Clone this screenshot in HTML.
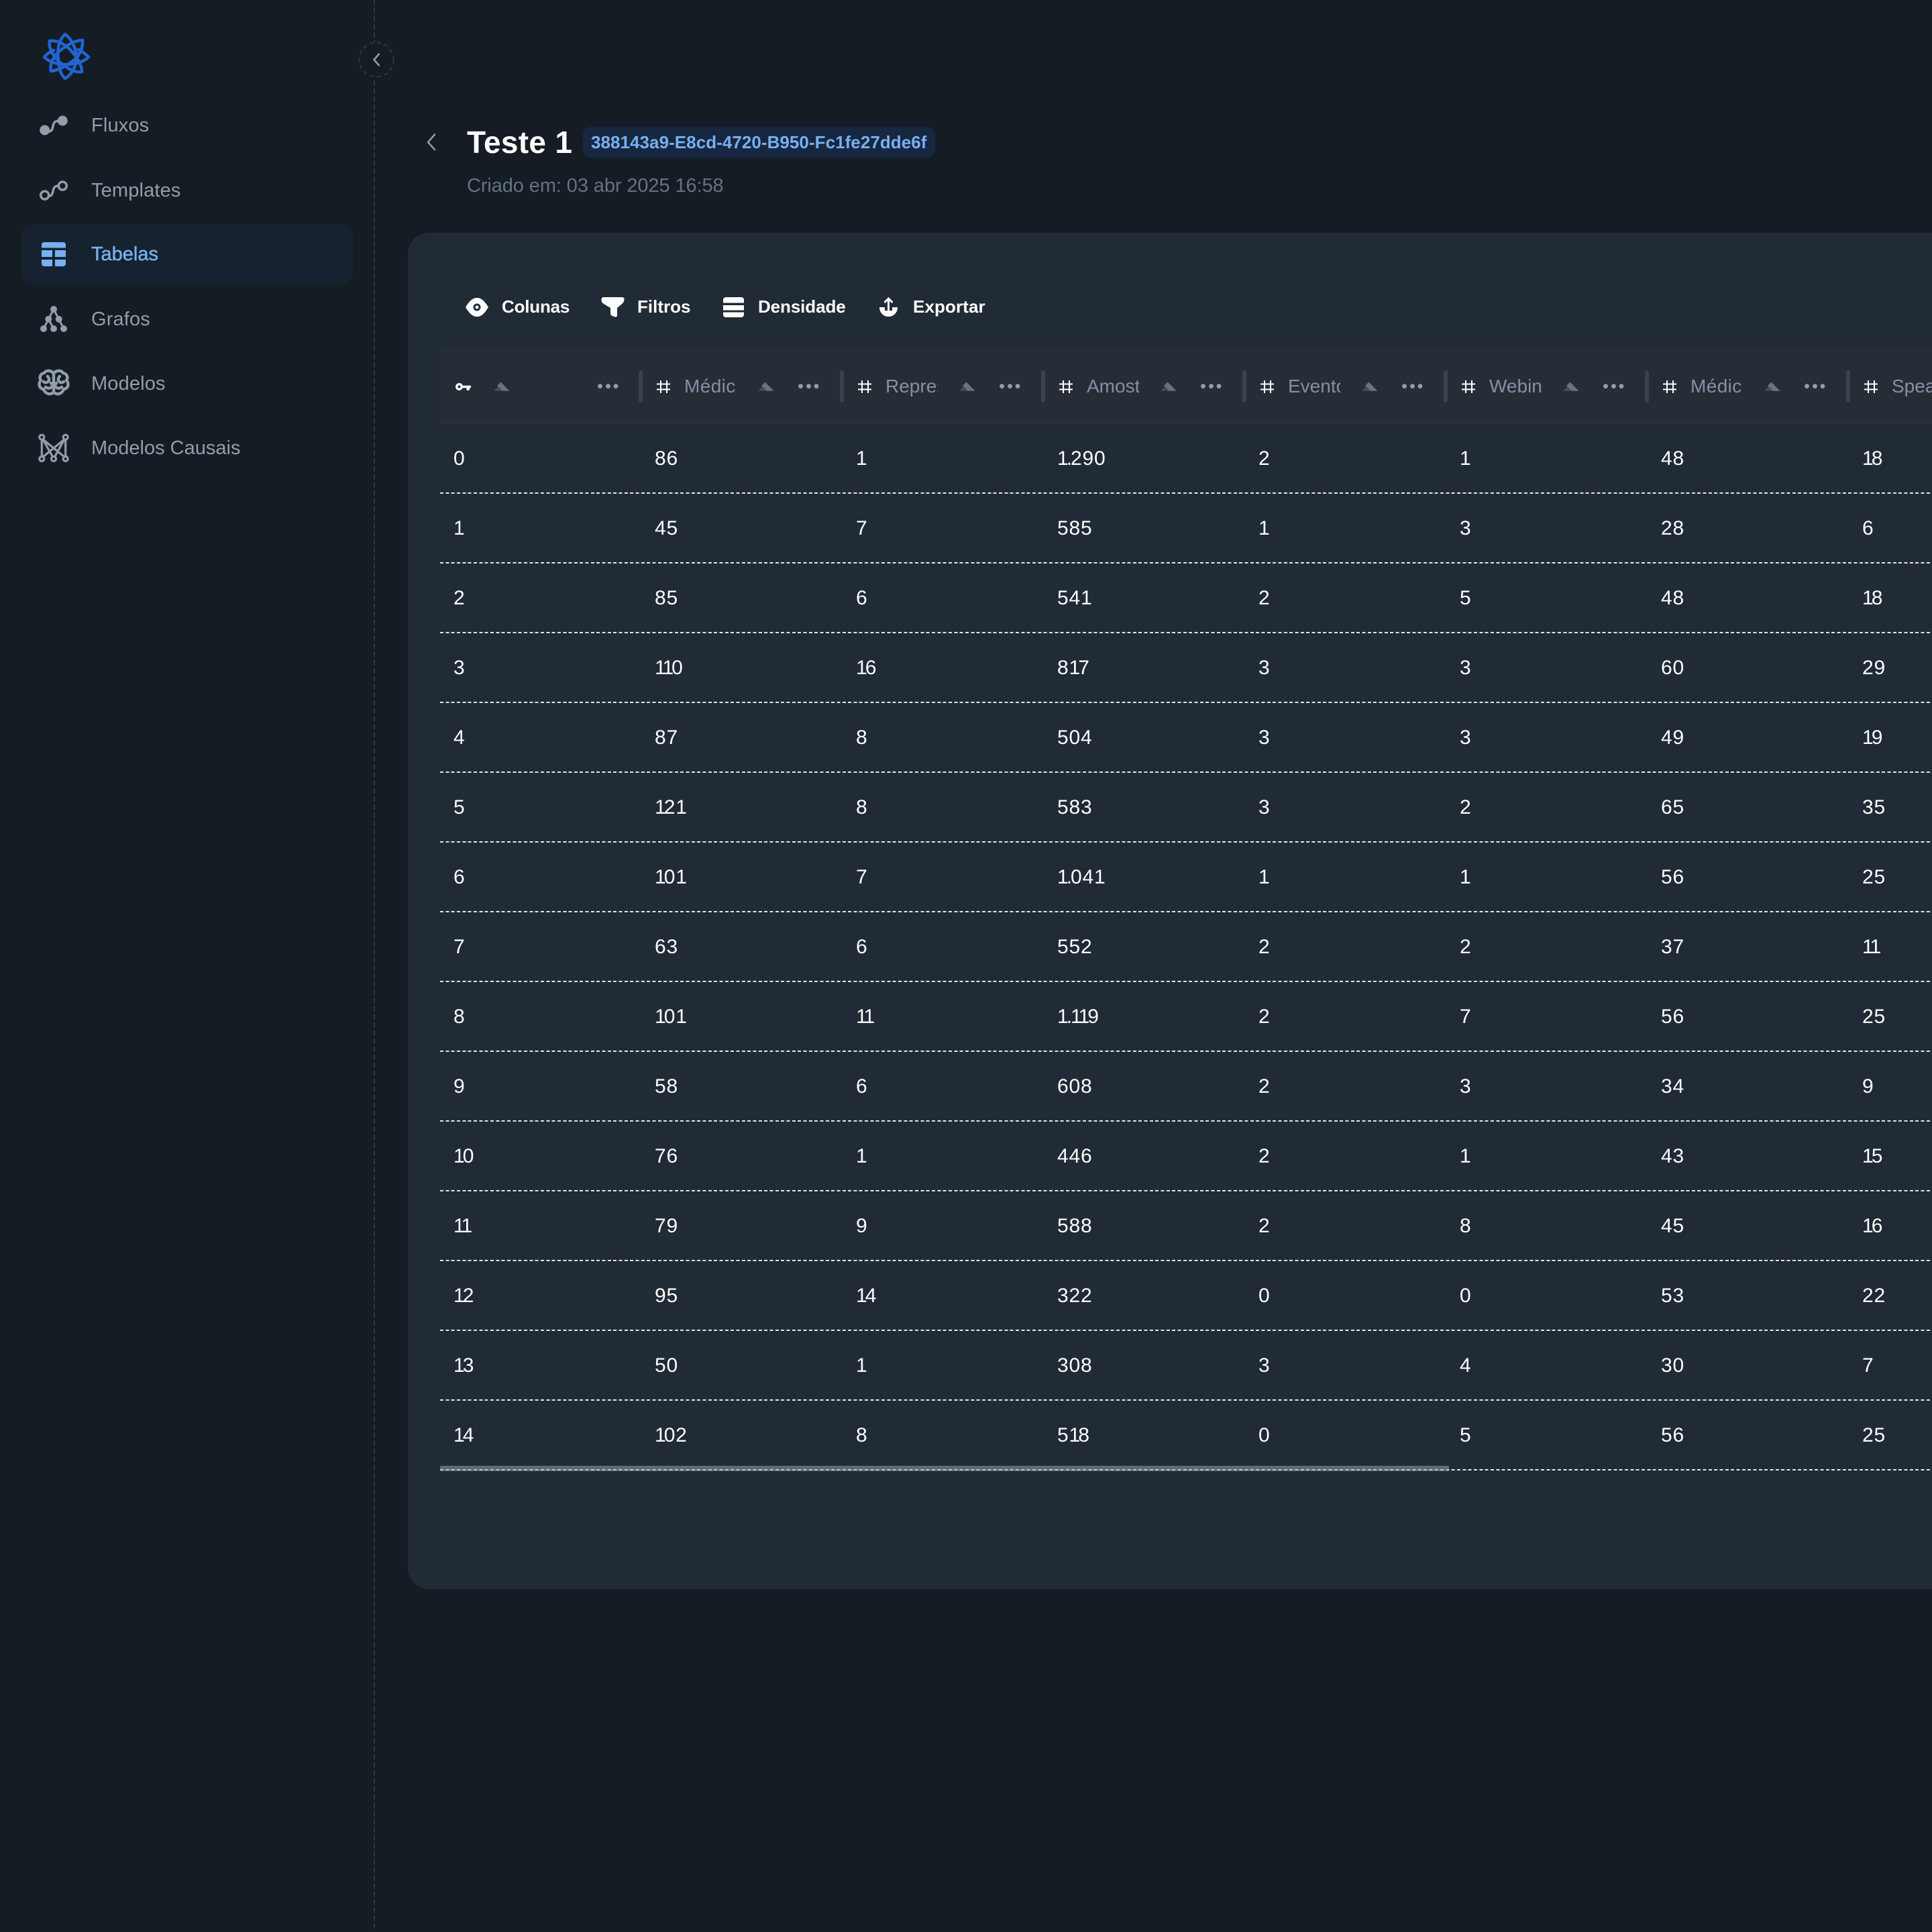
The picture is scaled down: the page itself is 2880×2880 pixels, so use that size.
<!DOCTYPE html>
<html lang="pt">
<head>
<meta charset="utf-8">
<title>Teste 1</title>
<style>
html,body{margin:0;padding:0;background:#161c24;}
body{position:relative;width:2880px;height:2880px;overflow:hidden;font-family:"Liberation Sans",sans-serif;color:#fff;}
.a{position:absolute;white-space:nowrap;}
.nav{left:136px;font-size:29px;line-height:40px;color:#919eab;letter-spacing:.15px;}
.tb{font-size:26px;font-weight:700;line-height:36px;top:439px;color:#fff;}
.card{position:absolute;left:608px;top:347px;width:2400px;height:2022px;background:#212b36;border-radius:32px;}
.head{position:absolute;left:656px;top:520px;width:2224px;height:112px;background:#262d37;border-bottom:2px solid #2c3039;box-sizing:border-box;}
.ht{position:absolute;top:556px;height:40px;line-height:40px;width:78px;overflow:hidden;font-size:28px;color:#8192a6;white-space:nowrap;}
.r{position:absolute;left:656px;width:2224px;height:104px;display:flex;font-size:30px;line-height:104px;letter-spacing:.8px;color:#fff;overflow:hidden;}
.r:after{content:"";position:absolute;left:0;right:0;bottom:0;height:2px;background:repeating-linear-gradient(90deg,rgba(255,255,255,.88) 0 5px,transparent 5px 8.33px);}
.r span{display:block;flex:0 0 300px;box-sizing:border-box;padding-left:20px;}
.r i{font-style:normal;letter-spacing:-3px;}
.r b{font-weight:400;letter-spacing:-2px;}
svg{position:absolute;left:0;top:0;}
</style>
</head>
<body>
<div class="a" style="left:32px;top:335px;width:494px;height:88px;background:#16222f;border-radius:16px;"></div>
<div class="card"></div>
<div class="head"></div>

<div class="a nav" style="top:167px;">Fluxos</div>
<div class="a nav" style="top:264px;">Templates</div>
<div class="a nav" style="top:359px;color:#76b0f1;letter-spacing:0;-webkit-text-stroke:.5px #76b0f1;">Tabelas</div>
<div class="a nav" style="top:456px;">Grafos</div>
<div class="a nav" style="top:552px;">Modelos</div>
<div class="a nav" style="top:648px;letter-spacing:0;">Modelos Causais</div>

<div class="a" style="left:696px;top:184px;font-size:46px;font-weight:700;line-height:56px;letter-spacing:.3px;">Teste 1</div>
<div class="a" style="left:869px;top:189px;width:525px;height:46px;background:#182740;border-radius:12px;"></div>
<div class="a" style="left:881px;top:194px;font-size:26px;font-weight:700;line-height:36px;color:#76b0f1;letter-spacing:.05px;">388143a9-E8cd-4720-B950-Fc1fe27dde6f</div>
<div class="a" style="left:696px;top:257px;font-size:29px;line-height:40px;color:#637381;letter-spacing:-.1px;">Criado em: 03 abr 2025 16:58</div>

<div class="a tb" style="left:748px;letter-spacing:-.2px;">Colunas</div>
<div class="a tb" style="left:950px;">Filtros</div>
<div class="a tb" style="left:1130px;letter-spacing:-.1px;">Densidade</div>
<div class="a tb" style="left:1361px;letter-spacing:.1px;">Exportar</div>

<div class="ht" style="left:1020px;width:77px;letter-spacing:.4px;">Médicos</div>
<div class="ht" style="left:1320px;">Representantes</div>
<div class="ht" style="left:1620px;">Amostras</div>
<div class="ht" style="left:1920px;">Eventos</div>
<div class="ht" style="left:2220px;">Webinars</div>
<div class="ht" style="left:2520px;width:77px;letter-spacing:.4px;">Médicos</div>
<div class="ht" style="left:2820px;">Speakers</div>

<div class="r" style="top:632px;"><span>0</span><span>86</span><span>1</span><span><i>1</i><b>.</b>290</span><span>2</span><span>1</span><span>48</span><span><i>1</i>8</span></div>
<div class="r" style="top:736px;"><span>1</span><span>45</span><span>7</span><span>585</span><span>1</span><span>3</span><span>28</span><span>6</span></div>
<div class="r" style="top:840px;"><span>2</span><span>85</span><span>6</span><span>54<i>1</i></span><span>2</span><span>5</span><span>48</span><span><i>1</i>8</span></div>
<div class="r" style="top:944px;"><span>3</span><span><i>11</i>0</span><span><i>1</i>6</span><span>8<i>1</i>7</span><span>3</span><span>3</span><span>60</span><span>29</span></div>
<div class="r" style="top:1048px;"><span>4</span><span>87</span><span>8</span><span>504</span><span>3</span><span>3</span><span>49</span><span><i>1</i>9</span></div>
<div class="r" style="top:1152px;"><span>5</span><span><i>1</i>2<i>1</i></span><span>8</span><span>583</span><span>3</span><span>2</span><span>65</span><span>35</span></div>
<div class="r" style="top:1256px;"><span>6</span><span><i>1</i>0<i>1</i></span><span>7</span><span><i>1</i><b>.</b>04<i>1</i></span><span>1</span><span>1</span><span>56</span><span>25</span></div>
<div class="r" style="top:1360px;"><span>7</span><span>63</span><span>6</span><span>552</span><span>2</span><span>2</span><span>37</span><span><i>11</i></span></div>
<div class="r" style="top:1464px;"><span>8</span><span><i>1</i>0<i>1</i></span><span><i>11</i></span><span><i>1</i><b>.</b><i>11</i>9</span><span>2</span><span>7</span><span>56</span><span>25</span></div>
<div class="r" style="top:1568px;"><span>9</span><span>58</span><span>6</span><span>608</span><span>2</span><span>3</span><span>34</span><span>9</span></div>
<div class="r" style="top:1672px;"><span><i>1</i>0</span><span>76</span><span>1</span><span>446</span><span>2</span><span>1</span><span>43</span><span><i>1</i>5</span></div>
<div class="r" style="top:1776px;"><span><i>11</i></span><span>79</span><span>9</span><span>588</span><span>2</span><span>8</span><span>45</span><span><i>1</i>6</span></div>
<div class="r" style="top:1880px;"><span><i>1</i>2</span><span>95</span><span><i>1</i>4</span><span>322</span><span>0</span><span>0</span><span>53</span><span>22</span></div>
<div class="r" style="top:1984px;"><span><i>1</i>3</span><span>50</span><span>1</span><span>308</span><span>3</span><span>4</span><span>30</span><span>7</span></div>
<div class="r" style="top:2088px;"><span><i>1</i>4</span><span><i>1</i>02</span><span>8</span><span>5<i>1</i>8</span><span>0</span><span>5</span><span>56</span><span>25</span></div>

<div class="a" style="left:656px;top:2185px;width:1504px;height:8px;background:rgba(145,158,171,.55);"></div>

<svg width="2880" height="2880" viewBox="0 0 2880 2880" fill="none">
  <!-- sidebar divider + collapse -->
  <path d="M558 0V2880" stroke="#919eab" stroke-opacity=".22" stroke-width="2" stroke-dasharray="7 5"/>
  <circle cx="561" cy="89" r="25.500" fill="#161c24" stroke="#919eab" stroke-opacity=".2" stroke-width="2" stroke-dasharray="6 5"/>
  <path d="M565 80.500L557.500 89L565 97.500" stroke="#919eab" stroke-width="2.500" stroke-linecap="round" stroke-linejoin="round"/>

  <!-- logo -->
  <g stroke="#2065d1" stroke-width="4.500" stroke-linejoin="round" stroke-linecap="round">
    <path d="M97 51C87 60 85 75 87 90C88 103 91 112 97 117C104 113 112 103 114 90C116 75 106 57 97 51Z"/>
    <path d="M74 61C88 59 100 68 110 80C118 90 122 100 122 107C110 109 98 100 88 92C78 82 72 70 74 61Z"/>
    <path d="M123 60C124 72 118 85 107 92C96 100 85 105 76 106C74 97 78 85 90 75C100 67 112 60 123 60Z"/>
    <path d="M66 85C72 92 88 97 100 96C112 96 125 92 132 85C127 80 122 76 117 74M66 85C70 80 75 77 80 75"/>
  </g>

  <!-- Fluxos -->
  <g fill="#919eab"><circle cx="66.700" cy="194" r="7.500"/><circle cx="93.300" cy="180" r="7.500"/></g>
  <path d="M70 196C78 197 78 192 79 188C80 182 82 180 90 180" stroke="#919eab" stroke-width="3.500"/>
  <!-- Templates -->
  <g stroke="#919eab" stroke-width="3.500"><circle cx="66.700" cy="291" r="6"/><circle cx="93.300" cy="277" r="6"/>
  <path d="M72 292C78 293 78 288 79 285C80 279 82 277 88 277"/></g>
  <!-- Tabelas -->
  <g fill="#76b0f1">
    <path d="M62 369.500V365a4 4 0 0 1 4-4H94a4 4 0 0 1 4 4v4.500Z"/>
    <rect x="62" y="373" width="16" height="10"/><rect x="82" y="373" width="16" height="10"/>
    <path d="M62 387H78V397H66a4 4 0 0 1-4-4Z"/><path d="M82 387H98V393a4 4 0 0 1-4 4H82Z"/>
  </g>
  <!-- Grafos -->
  <g fill="#919eab"><circle cx="80" cy="461" r="5"/><circle cx="72.300" cy="475.700" r="5"/><circle cx="87.700" cy="475.700" r="5"/><circle cx="65" cy="490" r="5"/><circle cx="80" cy="490" r="5"/><circle cx="95" cy="490" r="5"/></g>
  <path d="M80 461L65 490M80 461L95 490M72.300 475.700L80 490" stroke="#919eab" stroke-width="3"/>
  <!-- Modelos (brain) -->
  <g stroke="#919eab" stroke-width="4.400" stroke-linecap="round" stroke-linejoin="round">
    <path d="M80 557C77 552 69 551 66 556C60 557 58 563 61 567C56 572 59 580 65 580C67 587 76 590 80 584"/>
    <path d="M71 561C74 564 74 568 70 570C67 571 65 569 65 569M68 577C72 580 76 579 78 575"/>
    <g transform="translate(160 0) scale(-1 1)">
      <path d="M80 557C77 552 69 551 66 556C60 557 58 563 61 567C56 572 59 580 65 580C67 587 76 590 80 584"/>
      <path d="M71 561C74 564 74 568 70 570C67 571 65 569 65 569M68 577C72 580 76 579 78 575"/>
    </g>
    <path d="M80 558V582M76 571L80 576L84 571"/>
  </g>
  <!-- Modelos Causais -->
  <g stroke="#919eab" stroke-width="3.200">
    <path d="M62.300 655V680.500M97.700 655V680.500M64 655L78.500 681M64 655L96 681M96 655L81.500 681M96 655L64 681"/>
    <circle cx="62.300" cy="651.700" r="3.500"/><circle cx="97.700" cy="651.700" r="3.500"/>
    <circle cx="62.300" cy="684" r="3.500"/><circle cx="80" cy="684" r="3.500"/><circle cx="97.700" cy="684" r="3.500"/>
  </g>

  <!-- back -->
  <path d="M648 200.500L638 212L648 223" stroke="#919eab" stroke-width="2.500" stroke-linecap="round" stroke-linejoin="round"/>

  <!-- toolbar icons -->
  <path fill="#fff" d="M694 458C700 448 705 444 711 444C717 444 722 448 728 458C722 468 717 472 711 472C705 472 700 468 694 458Z"/>
  <circle cx="711" cy="458" r="5.500" fill="#212b36"/><circle cx="711" cy="458" r="2.500" fill="#fff"/>
  <path fill="#fff" d="M900 443H927Q931 443 930.500 447Q930 451 926 454L920 459V470Q920 473 917 472.500L913 471Q910 470 910 467V459L900 453Q896.500 451 896.500 447Q896.500 443 900 443Z"/>
  <path fill="#fff" d="M1082 443H1105a4 4 0 0 1 4 4V451.500H1078V447a4 4 0 0 1 4-4ZM1078 455H1109V462.500H1078ZM1078 465.500H1109V469a4 4 0 0 1-4 4H1082a4 4 0 0 1-4-4Z"/>
  <path fill="#fff" d="M1311 458H1319V463H1330V458H1338C1338 466 1332 472 1324.500 472C1317 472 1311 466 1311 458Z"/>
  <path d="M1324.500 463V445.500M1318.500 451L1324.500 445L1330.500 451" stroke="#fff" stroke-width="3"/>

  <!-- key -->
  <path fill="#fff" fill-rule="evenodd" d="M684.500 571a5.500 5.500 0 0 1 5.200 3.700H702V578.300H700V581.700H695.500V578.300H689.700A5.500 5.500 0 1 1 684.500 571ZM684.500 574.500a2 2 0 1 0 0 4a2 2 0 0 0 0-4Z"/>

  <!-- separators -->
  <g fill="#39434f">
    <rect x="952" y="552" width="6" height="48" rx="3"/><rect x="1252" y="552" width="6" height="48" rx="3"/>
    <rect x="1552" y="552" width="6" height="48" rx="3"/><rect x="1852" y="552" width="6" height="48" rx="3"/>
    <rect x="2152" y="552" width="6" height="48" rx="3"/><rect x="2452" y="552" width="6" height="48" rx="3"/>
    <rect x="2752" y="552" width="6" height="48" rx="3"/>
  </g>

  <!-- hash icons -->
  <path stroke="#fff" stroke-width="2" d="M985 567V586M994 567V586M979 572.500H999M979 580.500H999
  M1285 567V586M1294 567V586M1279 572.500H1299M1279 580.500H1299
  M1585 567V586M1594 567V586M1579 572.500H1599M1579 580.500H1599
  M1885 567V586M1894 567V586M1879 572.500H1899M1879 580.500H1899
  M2185 567V586M2194 567V586M2179 572.500H2199M2179 580.500H2199
  M2485 567V586M2494 567V586M2479 572.500H2499M2479 580.500H2499
  M2785 567V586M2794 567V586M2779 572.500H2799M2779 580.500H2799"/>

  <!-- sort icons -->
  <g fill="#647484">
    <path d="M746.500 569.500L759.500 582.700H748L741 575Z"/><path d="M1140.500 569.500L1153.500 582.700H1142L1135 575Z"/>
    <path d="M1440.500 569.500L1453.500 582.700H1442L1435 575Z"/><path d="M1740.500 569.500L1753.500 582.700H1742L1735 575Z"/>
    <path d="M2040.500 569.500L2053.500 582.700H2042L2035 575Z"/><path d="M2340.500 569.500L2353.500 582.700H2342L2335 575Z"/>
    <path d="M2640.500 569.500L2653.500 582.700H2642L2635 575Z"/>
  </g>
  <g fill="#424e5a">
    <path d="M736 582.700L742.500 576L749 582.700Z"/><path d="M1130 582.700L1136.500 576L1143 582.700Z"/>
    <path d="M1430 582.700L1436.500 576L1443 582.700Z"/><path d="M1730 582.700L1736.500 576L1743 582.700Z"/>
    <path d="M2030 582.700L2036.500 576L2043 582.700Z"/><path d="M2330 582.700L2336.500 576L2343 582.700Z"/>
    <path d="M2630 582.700L2636.500 576L2643 582.700Z"/>
  </g>

  <!-- dots -->
  <g fill="#919eab">
    <circle cx="894.500" cy="575.700" r="3.400"/><circle cx="906.500" cy="575.700" r="3.400"/><circle cx="918" cy="575.700" r="3.400"/>
    <circle cx="1193.500" cy="575.700" r="3.400"/><circle cx="1205.500" cy="575.700" r="3.400"/><circle cx="1217" cy="575.700" r="3.400"/>
    <circle cx="1493.500" cy="575.700" r="3.400"/><circle cx="1505.500" cy="575.700" r="3.400"/><circle cx="1517" cy="575.700" r="3.400"/>
    <circle cx="1793.500" cy="575.700" r="3.400"/><circle cx="1805.500" cy="575.700" r="3.400"/><circle cx="1817" cy="575.700" r="3.400"/>
    <circle cx="2093.500" cy="575.700" r="3.400"/><circle cx="2105.500" cy="575.700" r="3.400"/><circle cx="2117" cy="575.700" r="3.400"/>
    <circle cx="2393.500" cy="575.700" r="3.400"/><circle cx="2405.500" cy="575.700" r="3.400"/><circle cx="2417" cy="575.700" r="3.400"/>
    <circle cx="2693.500" cy="575.700" r="3.400"/><circle cx="2705.500" cy="575.700" r="3.400"/><circle cx="2717" cy="575.700" r="3.400"/>
  </g>
</svg>
</body>
</html>
